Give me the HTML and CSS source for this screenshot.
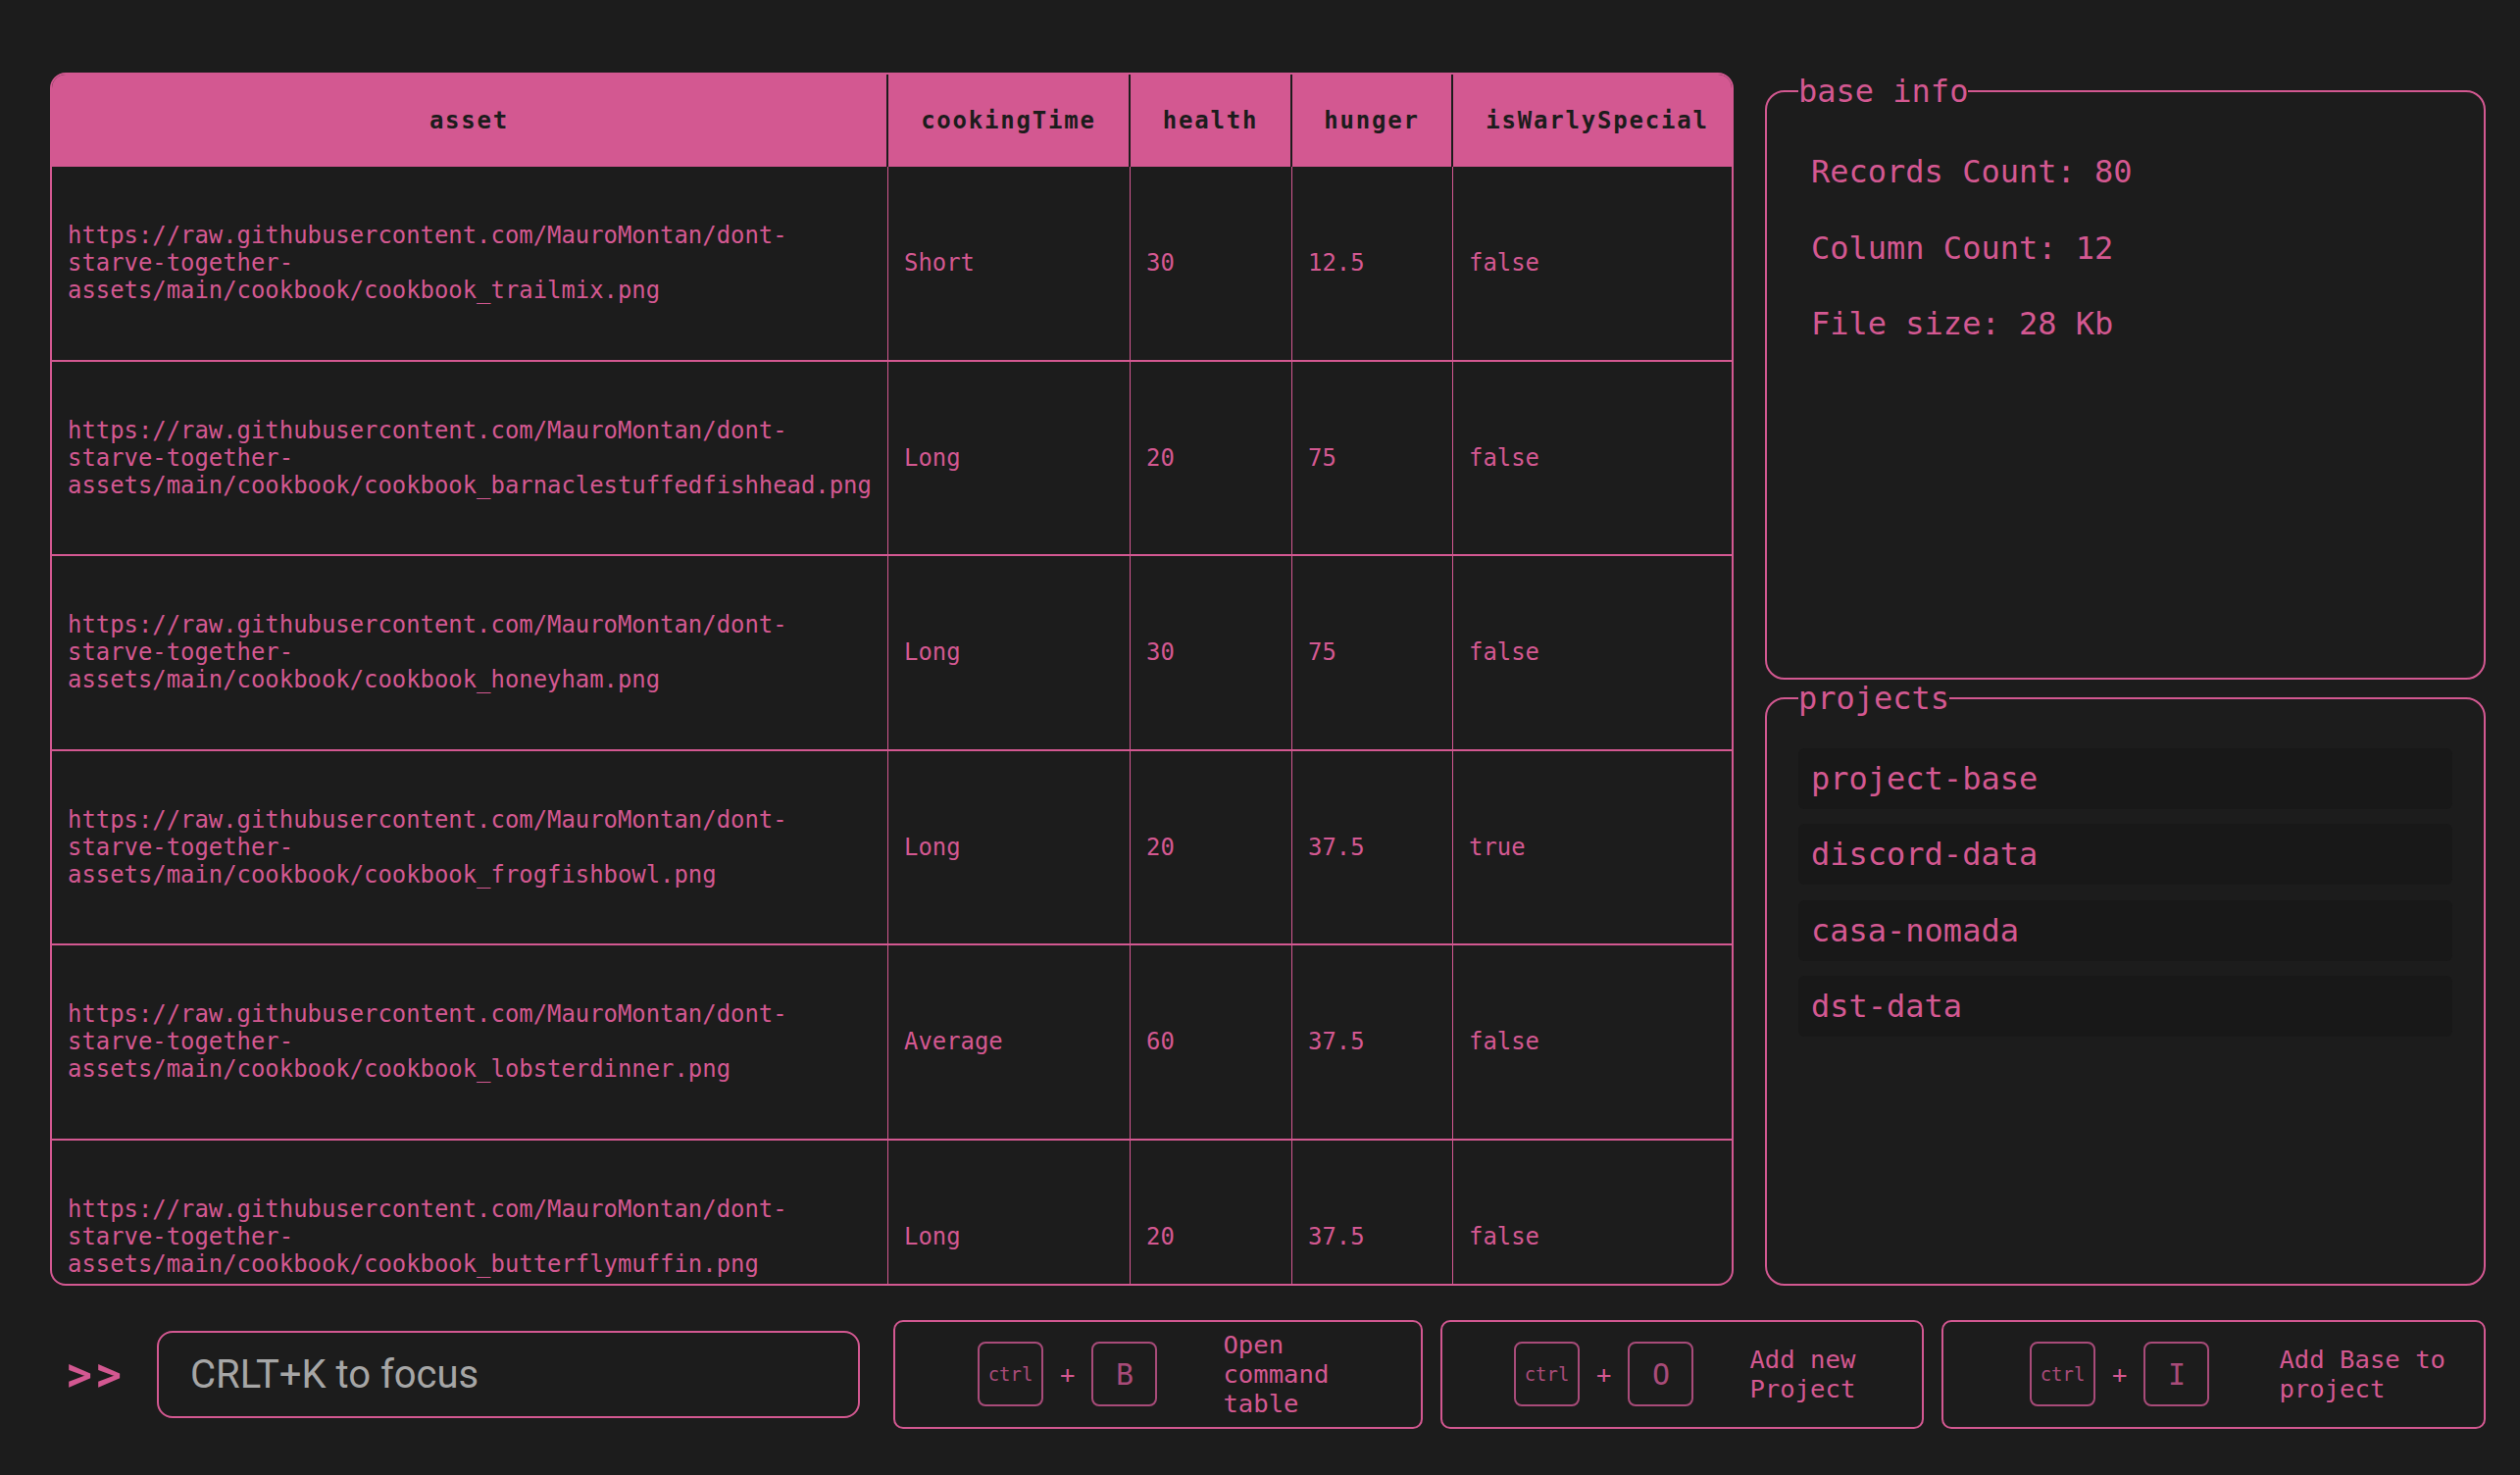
FILE: index.html
```html
<!DOCTYPE html>
<html lang="en">
<head>
<meta charset="utf-8">
<title>Base viewer</title>
<link rel="stylesheet" href="styles.css">
</head>
<body>
<div class="app">
  <div class="main">
    <div class="table-wrap">
      <table class="data-table">
        <colgroup>
          <col class="col-asset">
          <col class="col-time">
          <col class="col-health">
          <col class="col-hunger">
          <col class="col-special">
        </colgroup>
        <thead>
          <tr>
            <th>asset</th>
            <th>cookingTime</th>
            <th>health</th>
            <th>hunger</th>
            <th>isWarlySpecial</th>
          </tr>
        </thead>
        <tbody>
          <tr>
            <td>https://raw.githubusercontent.com/MauroMontan/dont-starve-together-assets/main/cookbook/cookbook_trailmix.png</td>
            <td>Short</td><td>30</td><td>12.5</td><td>false</td>
          </tr>
          <tr>
            <td>https://raw.githubusercontent.com/MauroMontan/dont-starve-together-assets/main/cookbook/cookbook_barnaclestuffedfishhead.png</td>
            <td>Long</td><td>20</td><td>75</td><td>false</td>
          </tr>
          <tr>
            <td>https://raw.githubusercontent.com/MauroMontan/dont-starve-together-assets/main/cookbook/cookbook_honeyham.png</td>
            <td>Long</td><td>30</td><td>75</td><td>false</td>
          </tr>
          <tr>
            <td>https://raw.githubusercontent.com/MauroMontan/dont-starve-together-assets/main/cookbook/cookbook_frogfishbowl.png</td>
            <td>Long</td><td>20</td><td>37.5</td><td>true</td>
          </tr>
          <tr>
            <td>https://raw.githubusercontent.com/MauroMontan/dont-starve-together-assets/main/cookbook/cookbook_lobsterdinner.png</td>
            <td>Average</td><td>60</td><td>37.5</td><td>false</td>
          </tr>
          <tr>
            <td>https://raw.githubusercontent.com/MauroMontan/dont-starve-together-assets/main/cookbook/cookbook_butterflymuffin.png</td>
            <td>Long</td><td>20</td><td>37.5</td><td>false</td>
          </tr>
        </tbody>
      </table>
    </div>
    <div class="side">
      <fieldset class="panel">
        <legend>base info</legend>
        <div class="panel-list">
          <div class="panel-item">Records Count: 80</div>
          <div class="panel-item">Column Count: 12</div>
          <div class="panel-item">File size: 28 Kb</div>
        </div>
      </fieldset>
      <fieldset class="panel">
        <legend>projects</legend>
        <div class="panel-list">
          <div class="panel-item project-item">project-base</div>
          <div class="panel-item project-item">discord-data</div>
          <div class="panel-item project-item">casa-nomada</div>
          <div class="panel-item project-item">dst-data</div>
        </div>
      </fieldset>
    </div>
  </div>
  <div class="bar">
    <div class="prompt">&gt;&gt;</div>
    <div class="command-input"><span class="placeholder">CRLT+K to focus</span></div>
    <div class="shortcut shortcut-table">
      <div class="keys">
        <span class="key key-ctrl">ctrl</span>
        <span class="plus">+</span>
        <span class="key">B</span>
      </div>
      <div class="shortcut-label">Open command table</div>
    </div>
    <div class="shortcut shortcut-project">
      <div class="keys">
        <span class="key key-ctrl">ctrl</span>
        <span class="plus">+</span>
        <span class="key">O</span>
      </div>
      <div class="shortcut-label">Add new Project</div>
    </div>
    <div class="shortcut shortcut-base">
      <div class="keys">
        <span class="key key-ctrl">ctrl</span>
        <span class="plus">+</span>
        <span class="key">I</span>
      </div>
      <div class="shortcut-label">Add Base to project</div>
    </div>
  </div>
</div>
</body>
</html>
```
FILE: styles.css
```css
* {
  box-sizing: border-box;
}

html,
body {
  margin: 0;
  padding: 0;
}

body {
  background: #1c1c1c;
  color: #d35891;
  font-family: "DejaVu Sans Mono", "Liberation Mono", monospace;
}

.app {
  width: 2570px;
  height: 1504px;
  padding: 74px 35px 0 51px;
  display: flex;
  flex-direction: column;
}

.main {
  display: flex;
  gap: 32px;
  height: 1237px;
}

/* ---------- table ---------- */
.table-wrap {
  flex: none;
  width: 1717px;
  height: 100%;
  border: 2px solid #d35891;
  border-radius: 16px;
  overflow: hidden;
}

.data-table {
  width: 1723px;
  table-layout: fixed;
  border-collapse: separate;
  border-spacing: 0;
  font-size: 23.9px;
  line-height: normal;
}

.col-asset { width: 853px; }
.col-time { width: 247px; }
.col-health { width: 165px; }
.col-hunger { width: 164px; }
.col-special { width: 294px; }

.data-table thead tr {
  height: 94px;
}

.data-table th {
  padding: 0;
  background: #d35891;
  color: #1c1c1c;
  font-size: 24px;
  font-weight: bold;
  letter-spacing: 1.8px;
  text-align: center;
  vertical-align: middle;
  border-right: 2px solid #1c1c1c;
}

.data-table th:last-child {
  border-right: 0;
}

.data-table tbody tr {
  height: 198.5px;
}

.data-table td {
  padding: 0 10px 0 16px;
  text-align: left;
  vertical-align: middle;
  border-right: 1px solid #d35891;
  border-bottom: 2px solid #d35891;
}

.data-table td:last-child {
  border-right: 0;
}

/* ---------- side panels ---------- */
.side {
  flex: none;
  width: 735px;
  display: flex;
  flex-direction: column;
}

.panel {
  flex: 1 1 0;
  min-height: 0;
  min-width: 0;
  margin: 0;
  padding: 32px 32px;
  border: 2px solid #d35891;
  border-radius: 20px;
  font-size: 32px;
  line-height: normal;
}

.panel legend {
  padding: 0;
  font-size: 32px;
  line-height: normal;
}

.panel-list {
  display: flex;
  flex-direction: column;
  gap: 15.5px;
}

.panel-item {
  padding: 12px 13px;
  border-radius: 6px;
}

.project-item {
  background: #181818;
}

/* ---------- bottom bar ---------- */
.bar {
  display: flex;
  align-items: center;
  height: 111px;
  margin-top: 34.5px;
  padding-left: 16px;
}

.prompt {
  flex: none;
  font-family: Roboto, "Liberation Sans", sans-serif;
  font-size: 52px;
  font-weight: 500;
  letter-spacing: 3px;
  line-height: normal;
  margin-right: 33px;
}

.command-input {
  flex: none;
  width: 717px;
  height: 89px;
  margin-right: 34px;
  padding-left: 32px;
  display: flex;
  align-items: center;
  border: 2px solid #d35891;
  border-radius: 16px;
  font-family: Roboto, "Liberation Sans", sans-serif;
  font-size: 40px;
  color: #a6a6a6;
}

.shortcut {
  flex: none;
  height: 111px;
  display: flex;
  align-items: center;
  border: 2px solid #d35891;
  border-radius: 10px;
}

.shortcut-table {
  width: 540px;
  padding-left: 84px;
  gap: 67px;
}

.shortcut-project {
  width: 493px;
  margin-left: 18px;
  padding-left: 73px;
  gap: 57px;
}

.shortcut-base {
  width: 555px;
  margin-left: 18px;
  padding-left: 88px;
  gap: 71px;
}

.keys {
  flex: none;
  display: flex;
  align-items: center;
  gap: 17px;
}

.key {
  width: 67px;
  height: 66px;
  display: flex;
  align-items: center;
  justify-content: center;
  border: 2px solid #a84b79;
  border-radius: 8px;
  color: #a84b79;
  font-size: 30px;
}

.key-ctrl {
  font-size: 19px;
}

.plus {
  font-size: 25.6px;
}

.shortcut-label {
  flex: none;
  width: 180px;
  font-size: 25.6px;
  line-height: normal;
}
```
